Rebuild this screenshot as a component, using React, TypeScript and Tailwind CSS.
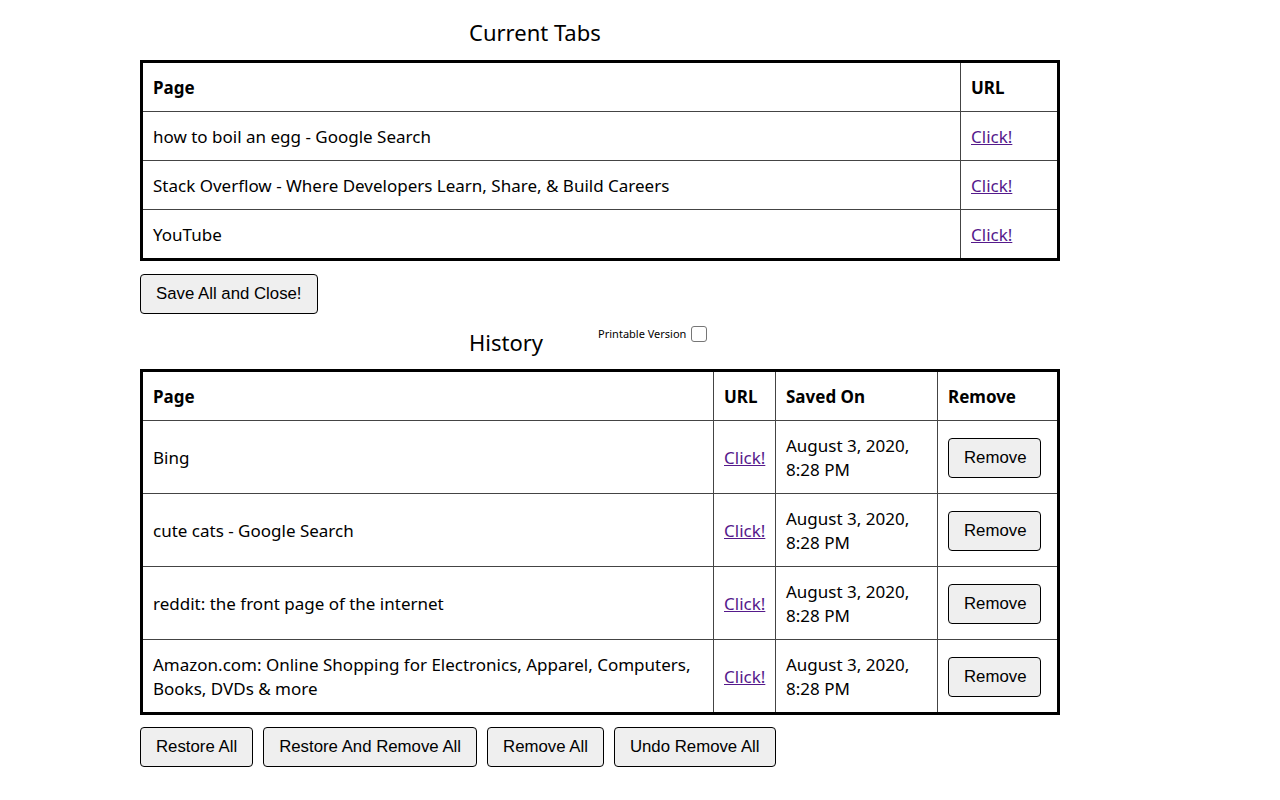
const currentTabs = [
  'how to boil an egg - Google Search',
  'Stack Overflow - Where Developers Learn, Share, & Build Careers',
  'YouTube',
];

const history = [
  'Bing',
  'cute cats - Google Search',
  'reddit: the front page of the internet',
  'Amazon.com: Online Shopping for Electronics, Apparel, Computers, Books, DVDs & more',
];

const btn =
  "h-10 px-[15px] border border-black rounded-[4px] bg-[#efefef] text-[16.8px] font-['Liberation_Sans',Arial,sans-serif] text-black";
const cell = 'border border-[#444] px-2.5 pt-[13px] pb-[11px] align-middle leading-6';
const link = 'text-[#551a8b] underline';

const App = () => {
  return (
    <div className="w-[1280px] h-[800px] bg-white text-black font-['Noto_Sans',sans-serif] text-[17px] pl-[140px]">
      <h1 className="ml-[329px] pt-[16px] text-[22px] leading-8 font-normal">Current Tabs</h1>

      <table className="mt-[12px] w-[920px] table-fixed border-collapse border-[3px] border-black">
        <colgroup>
          <col className="w-[819px]" />
          <col />
        </colgroup>
        <thead>
          <tr>
            <th className={`${cell} text-left font-bold`}>Page</th>
            <th className={`${cell} text-left font-bold`}>URL</th>
          </tr>
        </thead>
        <tbody>
          {currentTabs.map((t) => (
            <tr key={t}>
              <td className={cell}>{t}</td>
              <td className={cell}>
                <a href="#" className={link}>Click!</a>
              </td>
            </tr>
          ))}
        </tbody>
      </table>

      <button className={`${btn} mt-[13px]`}>Save All and Close!</button>

      <div className="flex items-start mt-[12px]">
        <h2 className="ml-[329px] text-[22px] leading-8 font-normal">History</h2>
        <label className="ml-[55px] flex items-center gap-[5px] text-[11px]">
          Printable Version
          <span className="w-4 h-4 border border-[#767676] rounded-[3px] bg-white" />
        </label>
      </div>

      <table className="mt-[11px] w-[920px] table-fixed border-collapse border-[3px] border-black">
        <colgroup>
          <col className="w-[572px]" />
          <col className="w-[62px]" />
          <col className="w-[162px]" />
          <col />
        </colgroup>
        <thead>
          <tr>
            <th className={`${cell} text-left font-bold`}>Page</th>
            <th className={`${cell} text-left font-bold`}>URL</th>
            <th className={`${cell} text-left font-bold`}>Saved On</th>
            <th className={`${cell} text-left font-bold`}>Remove</th>
          </tr>
        </thead>
        <tbody>
          {history.map((h) => (
            <tr key={h}>
              <td className={cell}>{h}</td>
              <td className={cell}>
                <a href="#" className={link}>Click!</a>
              </td>
              <td className={cell}>
                August 3, 2020,
                <br />
                8:28 PM
              </td>
              <td className={cell}>
                <button className={`${btn} w-[93px] px-0 block -mt-px`}>Remove</button>
              </td>
            </tr>
          ))}
        </tbody>
      </table>

      <div className="flex gap-2.5 mt-[12px]">
        <button className={btn}>Restore All</button>
        <button className={btn}>Restore And Remove All</button>
        <button className={btn}>Remove All</button>
        <button className={btn}>Undo Remove All</button>
      </div>
    </div>
  );
};

export default App;
